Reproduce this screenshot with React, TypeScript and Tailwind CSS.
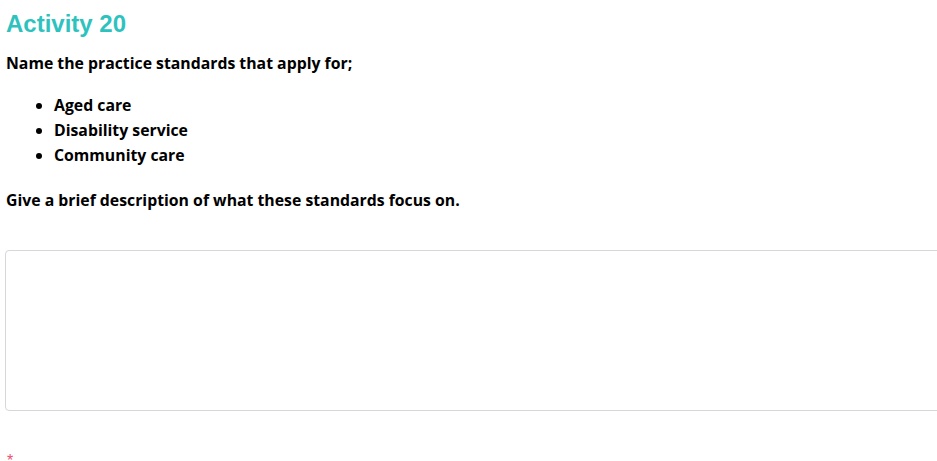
export default function App() {
  return (
    <div className="min-h-screen bg-white pl-[6px] pt-[9px] overflow-hidden">
      <h2 className="text-[24px] leading-[30px] font-bold text-[#2ec2bf] font-['Liberation_Sans',Arial,sans-serif]">
        Activity 20
      </h2>
      <div className="font-['Open_Sans','Noto_Sans',sans-serif] font-bold text-[15.8px] text-black">
        <p className="mt-[12px] leading-[24px]">Name the practice standards that apply for;</p>
        <ul className="mt-[18px] list-disc pl-[48px] leading-[25px]">
          <li>Aged care</li>
          <li>Disability service</li>
          <li>Community care</li>
        </ul>
        <p className="mt-[20px] leading-[24px]">Give a brief description of what these standards focus on.</p>
      </div>
      <div className="mt-[38px] -mr-[20px]">
        <textarea className="block w-full h-[161px] -ml-[1px] rounded-[4px] border border-[#d6d6dc] resize-none outline-none" />
      </div>
      <div className="mt-[42px] pl-[1px] text-[#f0506e] text-[16px] leading-[16px] font-['Liberation_Sans',sans-serif]">*</div>
    </div>
  );
}
